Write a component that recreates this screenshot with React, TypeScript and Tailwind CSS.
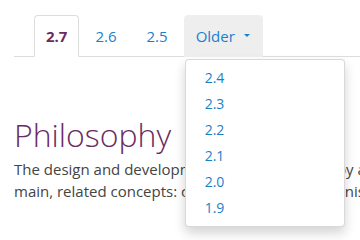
import React from "react";

const tabs = ["2.7", "2.6", "2.5"];
const older = ["2.4", "2.3", "2.2", "2.1", "2.0", "1.9"];

export default function App() {
  return (
    <div className="relative h-[240px] w-[360px] overflow-hidden bg-white font-['Open_Sans',sans-serif] text-[#444]">
      <div className="w-[600px] pl-[14px] pt-[15px]">
        <ul className="flex border-b border-[#ddd] pl-[20px]">
          {tabs.map((t, i) => (
            <li key={t} className="-mb-px mr-[2px]">
              {i === 0 ? (
                <a className="block rounded-t border border-[#ddd] border-b-white bg-white px-[11px] py-[10px] text-[15px] font-bold leading-[20px] text-[#6a2c62]">
                  {t}
                </a>
              ) : (
                <a className="block rounded-t border border-transparent px-[13px] py-[10px] text-[15px] leading-[20px] text-[#1b7fcc]">
                  {t}
                </a>
              )}
            </li>
          ))}
          <li className="relative -mb-px">
            <a className="flex items-center rounded-t border border-[#eee] bg-[#eee] pl-[11px] pr-[12px] py-[10px] text-[15px] leading-[20px] text-[#1b7fcc]">
              Older
              <span className="ml-[9px] mt-[-2px] h-0 w-0 border-x-[3px] border-t-[3px] border-x-transparent border-t-[#1b7fcc]" />
            </a>
            <ul className="absolute left-[1px] top-[44px] z-10 w-[160px] rounded border border-[rgba(0,0,0,0.15)] bg-white py-[5px] shadow-[0_6px_12px_rgba(0,0,0,0.175)]">
              {older.map((v) => (
                <li key={v} className="px-[19px] text-[14px] leading-[26px] text-[#1b7fcc]">
                  {v}
                </li>
              ))}
            </ul>
          </li>
        </ul>

        <h1 className="mt-[58px] text-[32px] font-light leading-[40px] text-[#6a2c62]">Philosophy</h1>
        <p className="mt-[3px] whitespace-nowrap text-[15px] leading-[22px]">
          The design and development of Kivy is guided by a few
          <br />
          main, related concepts: clarity, coherent mechanisms
        </p>
      </div>
    </div>
  );
}
